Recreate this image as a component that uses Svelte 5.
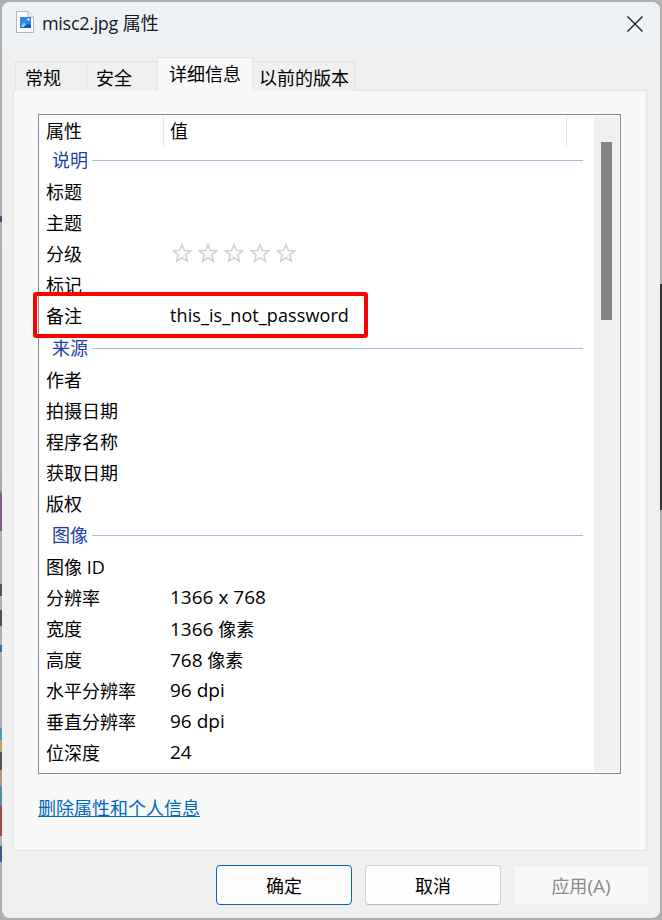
<script lang="ts">
  const groups = [
    {
      title: '说明',
      rows: [
        { name: '标题' },
        { name: '主题' },
        { name: '分级', stars: 5 },
        { name: '标记' },
        { name: '备注', text: 'this_is_not_password', marked: true },
      ],
    },
    {
      title: '来源',
      rows: [
        { name: '作者' },
        { name: '拍摄日期' },
        { name: '程序名称' },
        { name: '获取日期' },
        { name: '版权' },
      ],
    },
    {
      title: '图像',
      rows: [
        { name: '图像 ID' },
        { name: '分辨率', num: '1366 x 768' },
        { name: '宽度', num: '1366', unit: '像素' },
        { name: '高度', num: '768', unit: '像素' },
        { name: '水平分辨率', num: '96 dpi' },
        { name: '垂直分辨率', num: '96 dpi' },
        { name: '位深度', num: '24' },
      ],
    },
  ];
</script>

<div class="desktop">
  <div class="window">
    <header class="titlebar">
      <svg class="file-icon" width="18" height="22" viewBox="0 0 18 22" aria-hidden="true">
        <path d="M.5.5h11.500l5.500 5.500v15.500h-17z" fill="#fff" stroke="#b5b5b5" />
        <path d="M12 .5v5.500h5.500" fill="#f0f0f0" stroke="#b5b5b5" />
        <rect x="4" y="6" width="11" height="11" fill="#2f86e0" />
        <path d="M4 17l4-6 3 3 2-1.500 2 2.500v2z" fill="#1457b8" />
        <path d="M5 15l3-4 2 2.500-3 3.500z" fill="#7cc4f5" />
        <circle cx="12.500" cy="8.500" r="1.200" fill="#d8eefc" />
      </svg>
      <span class="title"><span class="file-name">misc2.jpg</span> 属性</span>
      <svg class="close" width="16" height="16" viewBox="0 0 16 16" aria-label="关闭">
        <path d="M.5.5l15 15M15.500.5l-15 15" stroke="#1a1a1a" stroke-width="1.300" fill="none" />
      </svg>
    </header>

    <nav class="tabs">
      <div class="tab short">常规</div>
      <div class="tab short">安全</div>
      <div class="tab active">详细信息</div>
      <div class="tab">以前的版本</div>
    </nav>

    <section class="panel">
      <div class="listbox">
        <div class="list">
          <div class="head">
            <div class="head-name">属性</div>
            <div class="head-value">值</div>
          </div>
          {#each groups as group}
            <div class="group">
              <span class="group-title">{group.title}</span>
              <span class="group-line"></span>
            </div>
            {#each group.rows as row}
              <div class="row">
                <div class="name">{row.name}</div>
                <div class="value">
                  {#if row.stars}
                    <span class="stars">
                      {#each Array(row.stars) as _}
                        <svg width="20" height="20" viewBox="0 0 20 20" aria-hidden="true">
                          <path
                            d="M10 1.500l2.400 5.900 6.300.5-4.800 4.100 1.500 6.200-5.400-3.300-5.400 3.300 1.500-6.200-4.800-4.100 6.300-.5z"
                            fill="#fafafa"
                            stroke="#cfcfcf"
                            stroke-width="1.400"
                          />
                        </svg>
                      {/each}
                    </span>
                  {:else if row.text}
                    <span class="text">{row.text}</span>
                  {:else if row.num}
                    <span class="num">{row.num}</span>
                    {#if row.unit}<span class="unit">{row.unit}</span>{/if}
                  {/if}
                </div>
                {#if row.marked}<span class="mark"></span>{/if}
              </div>
            {/each}
          {/each}
        </div>
        <div class="scrollbar"><div class="thumb"></div></div>
      </div>
      <a class="link" href="#remove">删除属性和个人信息</a>
    </section>

    <footer class="buttons">
      <button class="primary">确定</button>
      <button>取消</button>
      <button disabled>应用<span class="access">(A)</span></button>
    </footer>
  </div>
</div>

<style>
  :global(body) {
    margin: 0;
  }
  .desktop {
    box-sizing: border-box;
    height: 920px;
    padding: 2px;
    background:
      linear-gradient(
          #b0b0b0 216px, #335577 216px, #335577 222px, #b2b2ae 222px, #a8aebc 300px, #a8aebc 400px, #b0b0b0 400px,
          #b0a8a8 490px, #7d5d8e 494px, #7d5d8e 531px, #b0b0b0 531px, #b0b0b0 584px, #555 584px, #555 596px,
          #b0b0b0 596px, #b0b0b0 610px, #505050 610px, #505050 626px, #b0b0b0 626px, #b0b0b0 645px, #2a6fb0 645px,
          #2a6fb0 652px, #b0b0b0 652px, #b0b0b0 728px, #4a9cb0 728px, #4a9cb0 740px, #c8a070 740px, #c8a070 752px,
          #555 752px, #555 770px, #c09080 770px, #c09080 786px, #4a90a8 786px, #4a90a8 806px, #a04848 806px,
          #a04848 836px, #b0b0b0 836px, #b0b0b0 846px, #3a5f90 846px, #3a5f90 862px, #b0b0b0 862px
        )
        left / 2px 100% no-repeat,
      linear-gradient(#b0b0b0 284px, #333 284px, #333 510px, #b0b0b0 510px) right / 2px 100% no-repeat,
      #b0b0b0;
    font-family: 'Open Sans', 'Noto Sans CJK SC', sans-serif;
    font-size: 18px;
    color: #000;
  }
  .window {
    display: flex;
    flex-direction: column;
    height: 100%;
    overflow: hidden;
    border-radius: 8px;
    background: #f0f0f0;
  }
  .titlebar {
    flex: none;
    display: flex;
    align-items: center;
    gap: 8px;
    height: 43px;
    padding: 0 17px 0 14px;
    background: #edf2f7;
  }
  .file-icon {
    margin-top: -3px;
  }
  .title {
    color: #1a1a1a;
    line-height: 1;
    margin-top: -2px;
  }
  .file-name {
    letter-spacing: -0.3px;
  }
  .close {
    margin-left: auto;
  }
  .tabs {
    display: flex;
    align-items: flex-end;
    height: 46px;
    margin-bottom: -1px;
    padding-left: 14px;
    position: relative;
    z-index: 1;
  }
  .tab {
    box-sizing: border-box;
    height: 30px;
    padding: 0 5px 0 6px;
    border: 1px solid #e3e3e3;
    border-bottom: none;
    margin-left: -1px;
    line-height: 32px;
    white-space: nowrap;
    background: #f0f0f0;
  }
  .tab.short {
    padding: 0 25px 0 9px;
  }
  .tab.active {
    height: 34px;
    padding: 0 11px;
    line-height: 33px;
    background: #f9f9f9;
  }
  .panel {
    box-sizing: border-box;
    flex: none;
    display: flex;
    flex-direction: column;
    height: 761px;
    margin: 0 13px 0 11px;
    padding: 23px 25px 0 24px;
    border: 1px solid #e2e2e2;
    background: #f9f9f9;
  }
  .listbox {
    box-sizing: border-box;
    flex: none;
    display: flex;
    height: 660px;
    padding: 1px;
    border: 1px solid #868a91;
    background: #fff;
  }
  .list {
    flex: 1;
    min-width: 0;
  }
  .head {
    display: flex;
    height: 27px;
  }
  .head-name,
  .head-value {
    box-sizing: border-box;
    height: 30px;
    padding-left: 6px;
    line-height: 30px;
    border-right: 1px solid #e5e5e5;
  }
  .head-name {
    width: 124px;
  }
  .head-value {
    width: 403px;
  }
  .group {
    display: flex;
    align-items: center;
    gap: 4px;
    height: 32.5px;
    padding: 0 11px 0 12px;
    color: #1c3fa8;
  }
  .group-line {
    flex: 1;
    height: 1px;
    margin-top: 3px;
    background: #a9bde3;
  }
  .row {
    position: relative;
    display: flex;
    align-items: center;
    height: 31px;
  }
  .name {
    box-sizing: border-box;
    width: 124px;
    padding-left: 6px;
    white-space: nowrap;
  }
  .value {
    padding-left: 6px;
    white-space: nowrap;
  }
  .text {
    letter-spacing: 0.1px;
  }
  .num {
    font-size: 19px;
  }
  .stars {
    display: flex;
    gap: 6px;
    margin-left: 2px;
  }
  .stars svg {
    display: block;
  }
  .mark {
    position: absolute;
    left: -7px;
    top: -7.5px;
    box-sizing: border-box;
    width: 335px;
    height: 46px;
    border: 4px solid #fe0000;
    border-radius: 3px;
  }
  .scrollbar {
    flex: none;
    box-sizing: border-box;
    width: 25px;
    padding: 26px 0 0 7px;
    background: #f0f0f0;
  }
  .thumb {
    width: 11px;
    height: 178px;
    background: #858585;
  }
  .link {
    align-self: flex-start;
    margin-top: 20px;
    color: #0067c0;
    text-decoration: underline;
  }
  .buttons {
    display: flex;
    justify-content: flex-end;
    gap: 12px;
    margin-top: 14px;
    padding-right: 11px;
  }
  button {
    box-sizing: border-box;
    width: 136px;
    height: 40px;
    padding: 0;
    border: 1px solid #d0d0d0;
    border-bottom-color: #b8b8b8;
    border-radius: 4px;
    background: #fdfdfd;
    color: #000;
    font: inherit;
  }
  button.primary {
    margin-right: 1px;
    border-color: #0067c0;
  }
  button:disabled {
    border-color: #ececec;
    background: #f8f8f8;
    color: #8a8a8a;
  }
  .access {
    font-size: 19px;
  }
</style>
